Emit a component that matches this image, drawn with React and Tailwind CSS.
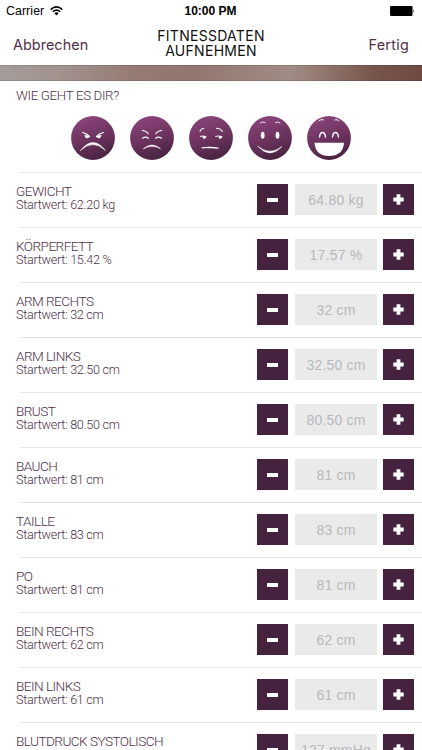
import { useState } from 'react';

const MEASUREMENTS = [
    { name: 'GEWICHT', start: '62.20 kg', value: '64.80 kg' },
    { name: 'KÖRPERFETT', start: '15.42 %', value: '17.57 %' },
    { name: 'ARM RECHTS', start: '32 cm', value: '32 cm' },
    { name: 'ARM LINKS', start: '32.50 cm', value: '32.50 cm' },
    { name: 'BRUST', start: '80.50 cm', value: '80.50 cm' },
    { name: 'BAUCH', start: '81 cm', value: '81 cm' },
    { name: 'TAILLE', start: '83 cm', value: '83 cm' },
    { name: 'PO', start: '81 cm', value: '81 cm' },
    { name: 'BEIN RECHTS', start: '62 cm', value: '62 cm' },
    { name: 'BEIN LINKS', start: '61 cm', value: '61 cm' },
    { name: 'BLUTDRUCK SYSTOLISCH', start: '127 mmHg', value: '127 mmHg' },
];

const MOODS = [
    {
        name: 'angry',
        face: (
            <>
                <path d="M11.5 16.5Q15.5 17 18.5 20.5M32.5 16.5Q28.5 17 25.5 20.5" strokeWidth="1.2" />
                <path d="M13.5 18.5L18.5 20.5Q18 22.5 16 22.3Q13.8 22 13.5 18.5ZM30.5 18.5L25.5 20.5Q26 22.5 28 22.3Q30.2 22 30.5 18.5Z" fill="white" stroke="none" />
                <path d="M9.5 34.5Q22 18.5 34.5 34.5Q22 22.5 9.5 34.5Z" fill="white" strokeWidth="0.5" />
            </>
        ),
    },
    {
        name: 'annoyed',
        face: (
            <>
                <path d="M12.3 14.5Q16 14.5 18.3 17.8M31.7 14.5Q28 14.5 25.7 17.8" strokeWidth="1.1" />
                <path d="M12.5 22.2Q15.5 20 18.5 22.2M25.5 22.2Q28.5 20 31.5 22.2" strokeWidth="1.2" />
                <path d="M13.5 32.7Q22 25.2 30.5 32.7Q22 28 13.5 32.7Z" fill="white" strokeWidth="0.5" />
            </>
        ),
    },
    {
        name: 'neutral',
        face: (
            <>
                <path d="M11 15.3Q12 12.6 14.8 12.2M27.5 12.2Q31.8 12.2 33.3 15.5" strokeWidth="1.1" />
                <path d="M11.3 20.3Q14.5 19.6 17 20.6M26.5 20.3Q29.5 19.6 33 20.6" strokeWidth="1" />
                <circle cx="15.3" cy="21.3" r="1.5" fill="white" stroke="none" />
                <circle cx="31.2" cy="21.3" r="1.5" fill="white" stroke="none" />
                <path d="M13 31.8Q21 30 29.5 32.2Q21 31.6 13 31.8Z" fill="white" strokeWidth="0.7" />
            </>
        ),
    },
    {
        name: 'happy',
        face: (
            <>
                <path d="M12.5 7Q14.5 5 17 6.5M27.5 6.5Q29.5 5 32 7" strokeWidth="0.9" />
                <ellipse cx="14.7" cy="19.3" rx="1.9" ry="3.5" fill="white" stroke="none" />
                <ellipse cx="29.5" cy="19.3" rx="1.9" ry="3.5" fill="white" stroke="none" />
                <path d="M10 30.5Q22 40 34 30.5Q22 43.5 10 30.5Z" fill="white" strokeWidth="0.5" />
            </>
        ),
    },
    {
        name: 'great',
        face: (
            <>
                <path d="M12 4.8Q14 2.8 16.5 3.8M28 3.8Q30 2.8 32 4.8" strokeWidth="0.9" />
                <path d="M12.5 21Q13 16.5 15.5 16.5Q18 16.5 18.5 21M25.5 21Q26 16.5 28.5 16.5Q31 16.5 31.5 21" strokeWidth="1.4" />
                <path d="M7.5 26.8H37Q36 40 22 40Q8.5 40 7.5 26.8Z" fill="white" stroke="none" />
            </>
        ),
    },
];

function MoodButton({ mood, onSelect }) {
    return (
        <button type="button" aria-label={mood.name} onClick={onSelect}>
            <svg viewBox="0 0 44 44" className="block size-11" fill="none" stroke="white" strokeLinecap="round">
                <defs>
                    <linearGradient id={`mood-${mood.name}`} x1="0.35" y1="0" x2="0.65" y2="1">
                        <stop offset="0" stopColor="#8a4579" />
                        <stop offset="0.5" stopColor="#6d335f" />
                        <stop offset="1" stopColor="#46233f" />
                    </linearGradient>
                </defs>
                <circle cx="22" cy="22" r="21.9" fill={`url(#mood-${mood.name})`} stroke="none" />
                {mood.face}
            </svg>
        </button>
    );
}

function StatusBar() {
    return (
        <div className="grid h-[22px] shrink-0 grid-cols-3 items-center pr-[7px] pl-[6px] text-[12px] leading-[22px] text-black">
            <div className="flex items-center gap-[6px]">
                <span className="text-[12.3px] tracking-[0.1px]">Carrier</span>
                <svg viewBox="0 0 13 10" className="h-[10px] w-[13px]" fill="none" stroke="black" strokeWidth="1.5">
                    <path d="M0.7 3.6Q6.5 -1.8 12.3 3.6" />
                    <path d="M2.8 5.8Q6.5 2.4 10.2 5.8" />
                    <path d="M4.4 7.2Q6.5 5.4 8.6 7.2L6.5 9.5Z" fill="black" stroke="none" />
                </svg>
            </div>
            <span className="text-center text-[12px] font-bold whitespace-nowrap">10:00 PM</span>
            <svg viewBox="0 0 25 10" className="h-[10px] w-[25px] justify-self-end">
                <rect width="22.5" height="10" rx="1.2" />
                <path d="M23.2 3.5Q24.8 5 23.2 6.5Z" />
            </svg>
        </div>
    );
}

function MeasurementRow({ item }) {
    return (
        <div className="flex h-[54px] shrink-0 pr-2 pl-4">
            <div className="w-[241px] pt-[12px] font-['Roboto','Liberation_Sans',sans-serif] font-light text-[#50304a]">
                <h2 className="text-[13.6px] leading-[13px] tracking-[-0.55px] whitespace-nowrap">{item.name}</h2>
                <p className="mt-px text-[12.6px] leading-[12px] tracking-[-0.28px] whitespace-nowrap">
                    Startwert: {item.start}
                </p>
            </div>
            <div className="flex pt-[11px]">
                <button type="button" aria-label="Weniger" className="flex h-[31px] w-[31px] items-center justify-center bg-[#45223d]">
                    <span className="h-[4px] w-[11px] bg-white" />
                </button>
                <div className="mr-[6px] ml-[7px] h-[31px] w-[82px] bg-[#eaeaea] text-center text-[14px] leading-[32px] tracking-[0.2px] whitespace-nowrap text-[#b8b8bd]">
                    {item.value}
                </div>
                <button type="button" aria-label="Mehr" className="flex h-[31px] w-[31px] items-center justify-center bg-[#45223d]">
                    <svg viewBox="0 0 11 11" className="size-[11px]" fill="white">
                        <path d="M3.6 0.3H7.4V3.6H10.7V7.4H7.4V10.7H3.6V7.4H0.3V3.6H3.6Z" />
                    </svg>
                </button>
            </div>
        </div>
    );
}

export default function App() {
    const [, setMood] = useState(null);

    return (
        <div className="flex h-[750px] w-[422px] flex-col overflow-hidden bg-white font-['Liberation_Sans',Arial,sans-serif]">
            <StatusBar />

            <header className="grid h-[43px] shrink-0 grid-cols-[1fr_120px_1fr] items-center px-[13px] font-['Inter','Liberation_Sans',sans-serif] text-[#50304a]">
                <button type="button" className="justify-self-start pt-[2px] text-[14.4px] leading-4 tracking-[0.05px]">
                    Abbrechen
                </button>
                <h1 className="-mt-px text-center text-[14px] leading-[15px] tracking-[0.28px] whitespace-nowrap text-[#111]">
                    FITNESSDATEN
                    <br />
                    AUFNEHMEN
                </h1>
                <button type="button" className="justify-self-end pt-[2px] text-[14.4px] leading-4 tracking-[0.25px]">
                    Fertig
                </button>
            </header>

            <div className="h-[15.5px] shrink-0 border-y border-black/10 bg-[linear-gradient(to_right,#a69c9a_0%,#a1928e_14%,#967a72_33%,#93776f_46%,#a08c84_69%,#8c7067_79%,#77544b_89%,#704a42_100%)]" />

            <section className="h-[91px] shrink-0">
                <h2 className="pt-[7px] pl-4 font-['Roboto','Liberation_Sans',sans-serif] text-[13.3px] leading-[15px] font-light tracking-[-0.35px] text-[#50304a]">
                    WIE GEHT ES DIR?
                </h2>
                <div className="mt-[13.5px] flex gap-[15px] pl-[71px]">
                    {MOODS.map((mood) => (
                        <MoodButton key={mood.name} mood={mood} onSelect={() => setMood(mood.name)} />
                    ))}
                </div>
            </section>

            <main className="flex flex-col pt-[0.5px]">
                {MEASUREMENTS.map((item) => (
                    <div key={item.name}>
                        <div className="ml-5 h-px bg-[#e6e6e6]" />
                        <MeasurementRow item={item} />
                    </div>
                ))}
            </main>
        </div>
    );
}
